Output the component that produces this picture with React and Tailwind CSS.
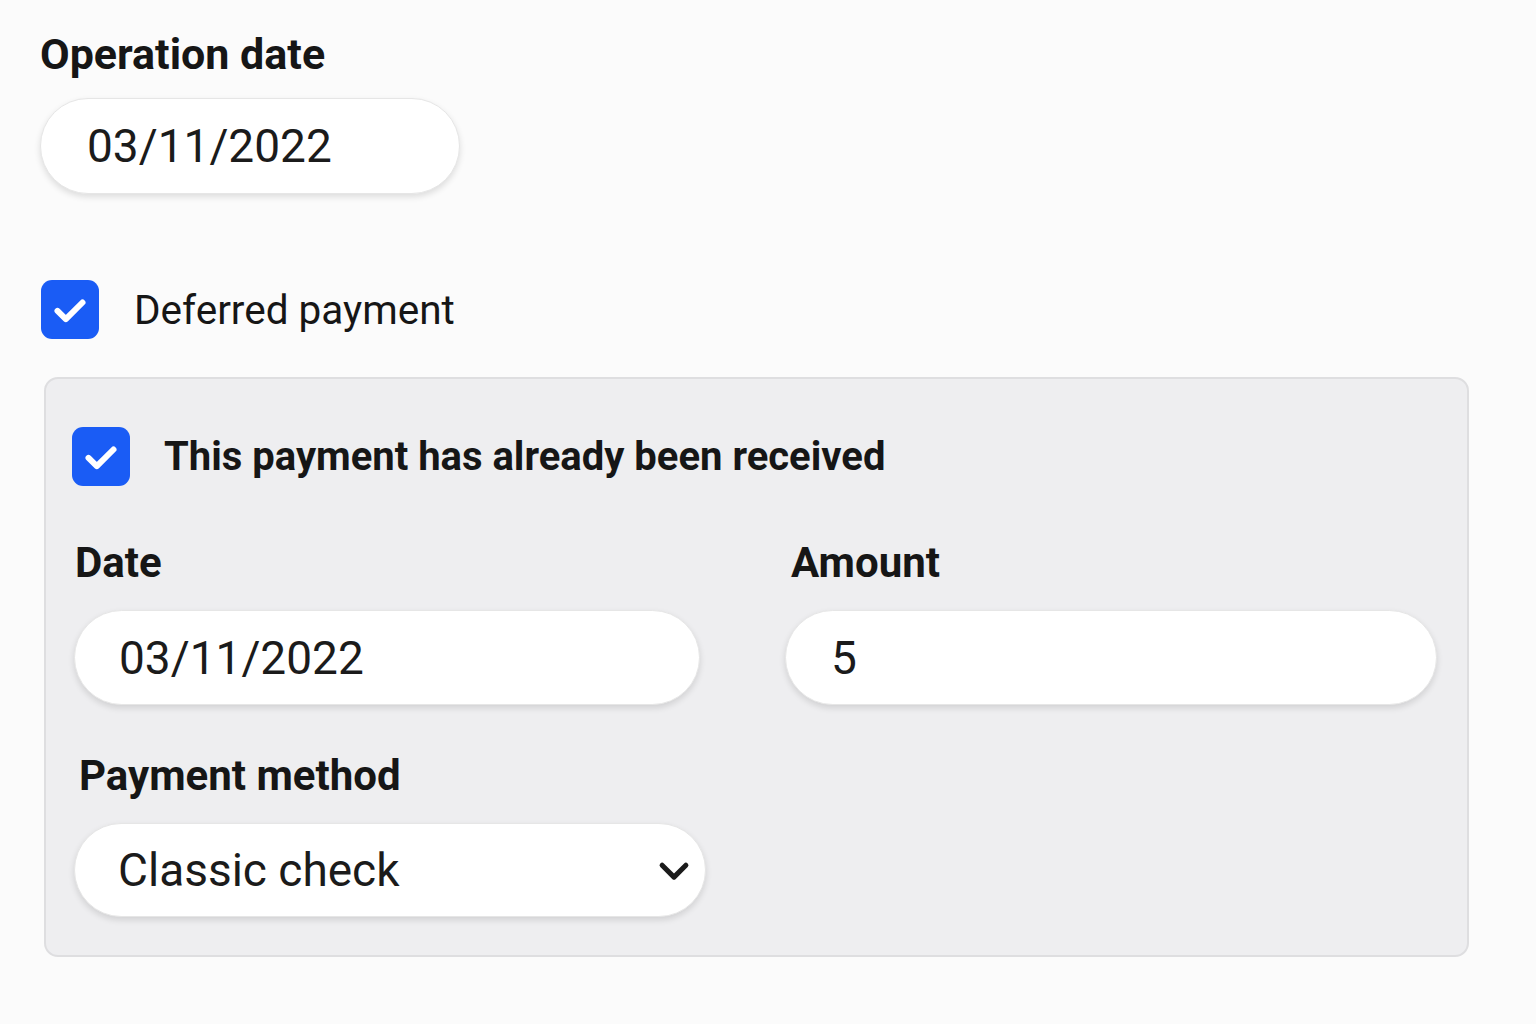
import React from 'react';

const font = { fontFamily: 'Roboto, "Noto Sans", sans-serif' };

const Check = ({ className = '' }) => (
  <div className={`w-[58px] h-[59px] rounded-[11px] bg-[#1a5cf5] flex items-center justify-center shrink-0 ${className}`}>
    <svg viewBox="0 0 24 24" className="w-[40px] h-[40px]" fill="none" stroke="white" strokeWidth="3.6" strokeLinecap="round" strokeLinejoin="round">
      <polyline points="4.5,12.5 9.5,17.5 19.5,7.5" />
    </svg>
  </div>
);

// pass width, height and padding in className; nothing here overlaps them
const Field = ({ value, className = '', children }) => (
  <div className={`rounded-full bg-white border border-[#e6e6e6] shadow-[0_3px_6px_rgba(0,0,0,0.12)] flex items-center text-[46px] text-[#1b1b1b] ${className}`}>
    <span className="flex-1 leading-none">{value}</span>
    {children}
  </div>
);

const App = () => {
  return (
    <div className="min-h-[1024px] w-[1536px] bg-[#fbfbfb] text-[#161616]" style={font}>
      <div className="pl-[40px] pt-[29px]">
        <h2 className="text-[43px] leading-[50px] font-bold">Operation date</h2>
        <Field value="03/11/2022" className="mt-[19px] w-[420px] h-[96px] pl-[46px] pr-[16px]" />

        <div className="mt-[86px] flex items-center">
          <Check className="ml-[1px]" />
          <span className="ml-[35px] text-[40.5px] leading-[48px]">Deferred payment</span>
        </div>

        {/* Received payment panel */}
        <div className="mt-[38px] ml-[4px] w-[1425px] h-[580px] rounded-[14px] border-2 border-[#dedee0] bg-[#eeeef0] pt-[48px] pl-[26px] pr-[30px]">
          <div className="flex items-center">
            <Check />
            <span className="ml-[34px] text-[40px] leading-[48px] font-bold">This payment has already been received</span>
          </div>

          <div className="mt-[52px] grid grid-cols-[626px_652px] gap-x-[85px] pl-[2px]">
            <div>
              <div className="text-[42px] leading-[50px] font-bold pl-[1px]">Date</div>
              <Field value="03/11/2022" className="mt-[22px] h-[95px] pl-[44px] pr-[16px]" />
            </div>
            <div>
              <div className="text-[42px] leading-[50px] font-bold pl-[6px]">Amount</div>
              <Field value="5" className="mt-[22px] h-[95px] pl-[45px] pr-[16px]" />
            </div>
          </div>

          <div className="mt-[46px] text-[42px] leading-[50px] font-bold pl-[7px]">Payment method</div>
          <Field value="Classic check" className="mt-[22px] ml-[2px] w-[632px] h-[94px] pl-[43px] pr-[12px]">
            <svg viewBox="0 0 24 24" className="w-[38px] h-[38px]" fill="none" stroke="#1b1b1b" strokeWidth="3.2" strokeLinecap="round" strokeLinejoin="round">
              <polyline points="4.5,9 12,16.5 19.5,9" />
            </svg>
          </Field>
        </div>
      </div>
    </div>
  );
};

export default App;
